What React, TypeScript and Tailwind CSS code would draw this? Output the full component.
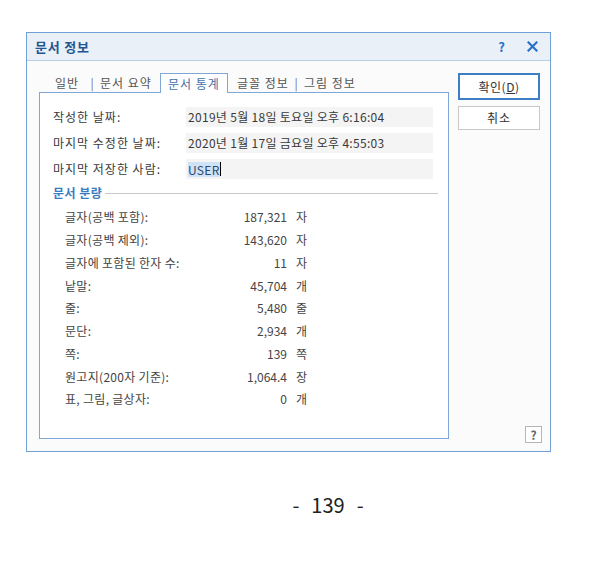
import React from "react";

const font = { fontFamily: '"Noto Sans CJK KR", "Noto Sans", sans-serif' };

const stats: [string, string, string][] = [
  ["글자(공백 포함):", "187,321", "자"],
  ["글자(공백 제외):", "143,620", "자"],
  ["글자에 포함된 한자 수:", "11", "자"],
  ["낱말:", "45,704", "개"],
  ["줄:", "5,480", "줄"],
  ["문단:", "2,934", "개"],
  ["쪽:", "139", "쪽"],
  ["원고지(200자 기준):", "1,064.4", "장"],
  ["표, 그림, 글상자:", "0", "개"],
];

export default function App() {
  return (
    <div className="w-[600px] h-[561px] bg-white pt-[32px] pl-[26px] text-[12px] text-[#3a3a3a]" style={font}>
      <div className="w-[525px] h-[420px] border border-[#6fa0d8] bg-[#fbfbfb] flex flex-col">
        {/* title bar */}
        <div className="h-[28px] bg-[#e9f0f8] border-b border-[#b8cde8] flex items-center pl-[8px] pr-[12px]">
          <span className="text-[13px] font-bold text-[#24558f] leading-none tracking-[0.8px]">문서 정보</span>
          <div className="ml-auto flex items-center">
            <span className="text-[13px] font-bold text-[#2b72c4] leading-none">?</span>
            <svg className="ml-[22px]" width="11" height="11" viewBox="0 0 11 11">
              <path d="M1.5 1.5 L9.5 9.5 M9.5 1.5 L1.5 9.5" stroke="#2b72c4" strokeWidth="2.2" strokeLinecap="square" />
            </svg>
          </div>
        </div>
        {/* body */}
        <div className="flex-1 flex flex-row pl-[12px] pt-[12px]">
          <div className="w-[410px] flex flex-col">
            {/* tabs */}
            <div className="h-[20px] flex flex-row items-stretch text-[#555] tracking-[1px]">
              <div className="w-[16px]" />
              <div className="w-[33px] flex items-center">일반</div>
              <div className="w-[8px] flex items-center justify-center text-[#777] tracking-normal">|</div>
              <div className="w-[64px] pl-[4px] flex items-center">문서 요약</div>
              <div className="relative z-10 w-[68px] h-[20px] bg-white border-t border-x border-[#7ea7d8] pl-[7px] flex items-center text-[#3f6fa8]">
                문서 통계
              </div>
              <div className="w-[64px] pl-[9px] flex items-center">글꼴 정보</div>
              <div className="w-[8px] flex items-center justify-center text-[#777] tracking-normal">|</div>
              <div className="pl-[4px] flex items-center">그림 정보</div>
            </div>
            {/* panel */}
            <div className="-mt-px w-[410px] h-[347px] border border-[#7ea7d8] bg-white pt-[14px]">
              <div className="flex flex-col gap-[6px] pl-[13px]">
                <div className="h-[20px] flex items-center">
                  <div className="w-[133px] tracking-[1px]">작성한 날짜:</div>
                  <div className="w-[247px] h-[20px] bg-[#f4f4f4] pl-[2px] flex items-center tracking-[0.3px]">2019년 5월 18일 토요일 오후 6:16:04</div>
                </div>
                <div className="h-[20px] flex items-center">
                  <div className="w-[133px] tracking-[1px]">마지막 수정한 날짜:</div>
                  <div className="w-[247px] h-[20px] bg-[#f4f4f4] pl-[2px] flex items-center tracking-[0.3px]">2020년 1월 17일 금요일 오후 4:55:03</div>
                </div>
                <div className="h-[20px] flex items-center">
                  <div className="w-[133px] tracking-[1px]">마지막 저장한 사람:</div>
                  <div className="w-[247px] h-[20px] bg-[#f4f4f4] pl-[2px] flex items-center">
                    <span className="bg-[#cfe2f6] text-[#2c4a6e] leading-[15px] tracking-[0.3px]">USER</span>
                    <span className="w-px h-[14px] bg-black" />
                  </div>
                </div>
              </div>
              {/* heading */}
              <div className="mt-[6px] h-[16px] flex items-center pl-[13px] pr-[10px]">
                <span className="font-bold text-[#3a7cc4] tracking-[0.5px]">문서 분량</span>
                <div className="flex-1 h-px bg-[#c9c9c9] ml-[3px]" />
              </div>
              {/* stats */}
              <div className="mt-[5px] flex flex-col pl-[25px] text-[#444]">
                {stats.map(([label, num, unit]) => (
                  <div key={label} className="h-[22.75px] flex items-center">
                    <div className="w-[170px] tracking-[0.3px]">{label}</div>
                    <div className="w-[52px] text-right">{num}</div>
                    <div className="ml-[9px]">{unit}</div>
                  </div>
                ))}
              </div>
            </div>
          </div>
          {/* buttons column */}
          <div className="ml-[9px] w-[91px] flex flex-col pb-[8px]">
            <div className="w-[82px] h-[27px] border-2 border-[#3d7ec4] bg-white flex items-center justify-center text-[#333] tracking-[0.5px]">
              확인(<span className="underline">D</span>)
            </div>
            <div className="mt-[6px] w-[82px] h-[24px] border border-[#c8c8c8] bg-white flex items-center justify-center text-[#333] tracking-[1px]">
              취소
            </div>
            <div className="mt-auto ml-auto mr-[7px] w-[17px] h-[17px] border border-[#b5b5b5] bg-white flex items-center justify-center text-[12px] font-bold text-[#666] leading-none">
              ?
            </div>
          </div>
        </div>
      </div>
      {/* page number */}
      <div className="-ml-[26px] w-[600px] mt-[40px] pl-[56px] flex justify-center items-center gap-[12px] text-[20px] text-[#222] leading-[26px]">
        <span>-</span>
        <span>139</span>
        <span>-</span>
      </div>
    </div>
  );
}
